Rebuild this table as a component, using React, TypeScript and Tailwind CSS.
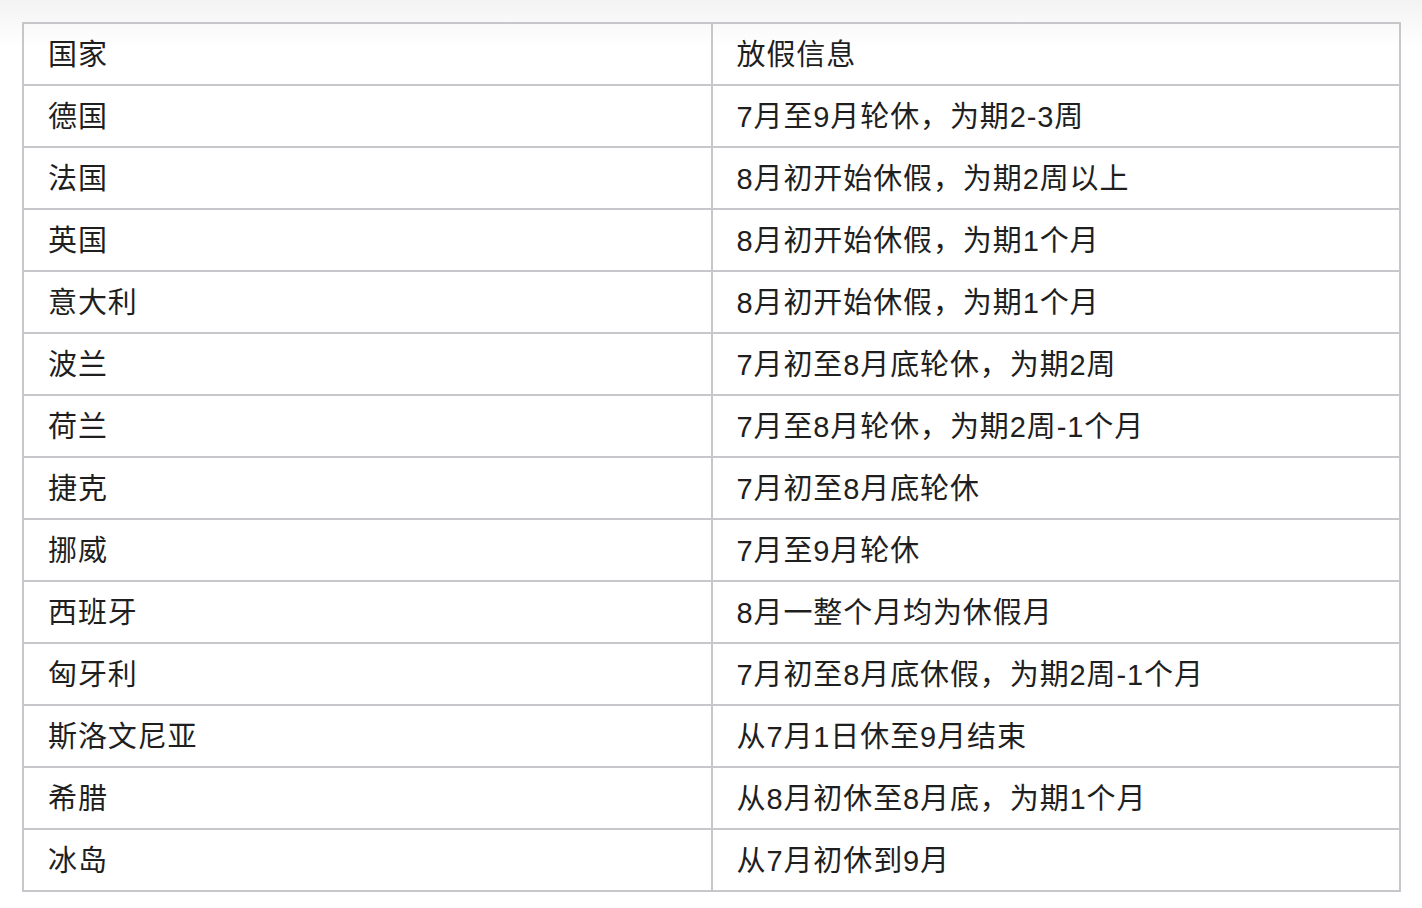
const rows: [string, string][] = [
  ["德国", "7月至9月轮休，为期2-3周"],
  ["法国", "8月初开始休假，为期2周以上"],
  ["英国", "8月初开始休假，为期1个月"],
  ["意大利", "8月初开始休假，为期1个月"],
  ["波兰", "7月初至8月底轮休，为期2周"],
  ["荷兰", "7月至8月轮休，为期2周-1个月"],
  ["捷克", "7月初至8月底轮休"],
  ["挪威", "7月至9月轮休"],
  ["西班牙", "8月一整个月均为休假月"],
  ["匈牙利", "7月初至8月底休假，为期2周-1个月"],
  ["斯洛文尼亚", "从7月1日休至9月结束"],
  ["希腊", "从8月初休至8月底，为期1个月"],
  ["冰岛", "从7月初休到9月"],
]

export default function App() {
  return (
    <div
      className="min-h-[908px] w-[1422px] bg-gradient-to-b from-[#f3f3f3] to-white to-[48px] pl-[22px] pt-[22px] text-[#1f1f1f]"
      style={{ fontFamily: '"Liberation Sans", "Noto Sans CJK SC", sans-serif' }}
    >
      <table className="w-[1379px] table-fixed border-collapse border-2 border-[#c6c6cb] text-[29px] tracking-[0.9px]">
        <tbody>
          <tr className="h-[62px]">
            <td className="border-2 border-[#c6c6cb] px-[24px] pt-[3px] leading-none">国家</td>
            <td className="border-2 border-[#c6c6cb] px-[24px] pt-[3px] leading-none">放假信息</td>
          </tr>
          {rows.map(([c, info]) => (
            <tr key={c} className="h-[62px]">
              <td className="border-2 border-[#c6c6cb] px-[24px] pt-[3px] leading-none">{c}</td>
              <td className="border-2 border-[#c6c6cb] px-[24px] pt-[3px] leading-none">{info}</td>
            </tr>
          ))}
        </tbody>
      </table>
    </div>
  )
}
